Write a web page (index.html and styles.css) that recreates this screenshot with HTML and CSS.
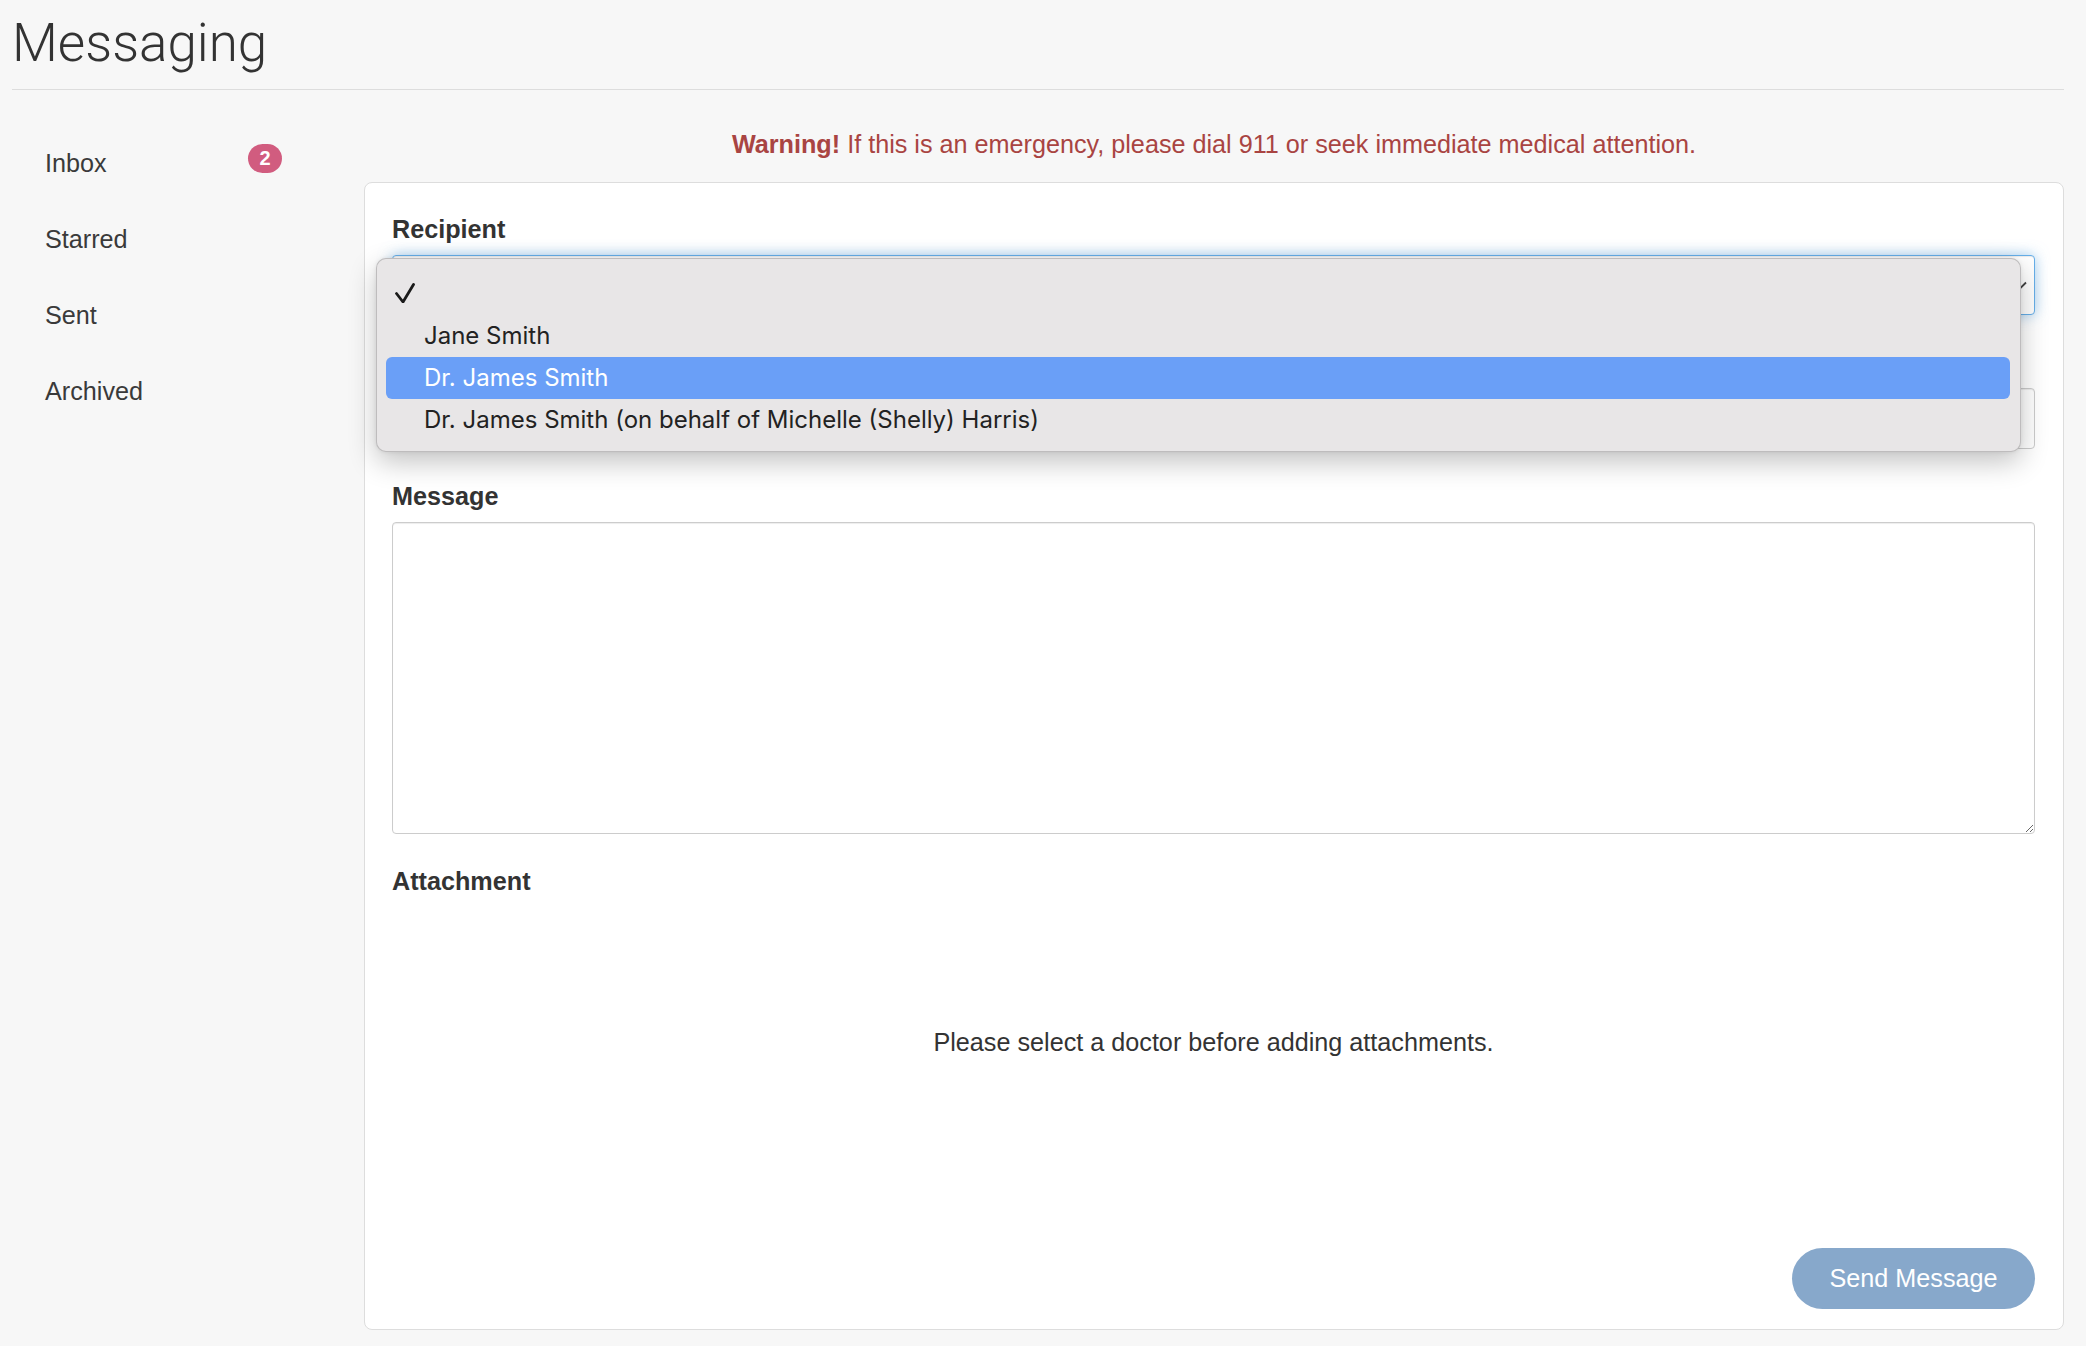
FILE: index.html
```html
<!DOCTYPE html>
<html lang="en">
<head>
    <meta charset="UTF-8">
    <meta name="viewport" content="width=device-width, initial-scale=1.0">
    <title>Messaging</title>
    <link rel="stylesheet" href="styles.css">
</head>
<body>
    <header class="pageHeader">
        <h1>Messaging</h1>
    </header>
    <div class="layout">
        <aside class="sidebar">
            <ul class="nav">
                <li><a href="#">Inbox <span class="badge">2</span></a></li>
                <li><a href="#">Starred</a></li>
                <li><a href="#">Sent</a></li>
                <li><a href="#">Archived</a></li>
            </ul>
        </aside>
        <main class="content">
            <p class="warning"><strong>Warning!</strong> If this is an emergency, please dial 911 or seek immediate medical attention.</p>
            <form class="card">
                <div class="formGroup">
                    <label>Recipient</label>
                    <div class="selectWrap">
                        <div class="select">
                            <svg width="14" height="9" viewBox="0 0 14 9"><path d="M1 1.5 L7 7.5 L13 1.5" fill="none" stroke="#444" stroke-width="1.8"/></svg>
                        </div>
                        <ul class="popup">
                            <li class="option">
                                <svg class="check" width="20" height="20" viewBox="0 0 20 20"><path d="M1.5 10.5 L8 19 L18.5 1.5" fill="none" stroke="#1a1a1a" stroke-width="2.8" stroke-linejoin="round" stroke-linecap="round"/></svg>
                                &nbsp;
                            </li>
                            <li class="option">Jane Smith</li>
                            <li class="option selected">Dr. James Smith</li>
                            <li class="option">Dr. James Smith (on behalf of Michelle (Shelly) Harris)</li>
                        </ul>
                    </div>
                </div>
                <div class="formGroup">
                    <label>Subject</label>
                    <input type="text" class="input">
                </div>
                <div class="formGroup">
                    <label>Message</label>
                    <textarea class="input textArea"></textarea>
                </div>
                <div class="formGroup">
                    <label>Attachment</label>
                    <div class="attachNote">Please select a doctor before adding attachments.</div>
                </div>
                <div class="actions">
                    <button type="button" class="sendBtn">Send Message</button>
                </div>
            </form>
        </main>
    </div>
</body>
</html>
```

FILE: styles.css
```css
* {
    box-sizing: border-box;
}
body {
    margin: 0;
    background-color: #f7f7f7;
    font-family: "Liberation Sans", Arial, sans-serif;
    font-size: 25.2px;
    line-height: 36px;
    color: #333;
}
.pageHeader {
    margin: 0 22px 0 12px;
    padding: 14px 0 16px;
    border-bottom: 1px solid #ddd;
}
.pageHeader h1 {
    margin: 0;
    font-family: Roboto, "Liberation Sans", sans-serif;
    font-weight: 300;
    font-size: 53px;
    line-height: 59px;
    color: #333;
}
.layout {
    display: flex;
    padding: 0 22px 0 12px;
}
.sidebar {
    width: 352px;
    flex-shrink: 0;
}
.nav {
    list-style: none;
    margin: 37px 0 0 6px;
    padding: 0;
    width: 291px;
}
.nav li {
    margin-bottom: 4px;
}
.nav a {
    display: flex;
    justify-content: space-between;
    align-items: flex-start;
    padding: 18px 27px;
    color: #3a3a3a;
    text-decoration: none;
}
.badge {
    margin-top: -1px;
    min-width: 34px;
    height: 29px;
    padding: 0 9px;
    border-radius: 15px;
    background-color: #d15c7f;
    color: #fff;
    font-size: 20px;
    font-weight: bold;
    line-height: 29px;
    text-align: center;
}
.content {
    flex: 1;
    min-width: 0;
}
.warning {
    margin: 36px 0 20px;
    text-align: center;
    color: #a94442;
}
.card {
    background-color: #fff;
    border: 1px solid #ddd;
    border-radius: 8px;
    padding: 28px 28px 20px 27px;
}
.formGroup {
    margin-bottom: 29px;
}
.formGroup label {
    display: block;
    font-weight: bold;
    margin-bottom: 8px;
}
.selectWrap {
    position: relative;
}
.select {
    display: flex;
    align-items: center;
    justify-content: flex-end;
    height: 60px;
    padding-right: 7px;
    background-color: #fff;
    border: 1px solid #66afe9;
    border-radius: 4px;
    box-shadow: inset 0 1px 1px rgba(0, 0, 0, .075), 0 0 14px rgba(102, 175, 233, .6);
}
.popup {
    position: absolute;
    left: -16px;
    right: 14px;
    top: 3px;
    margin: 0;
    padding: 14px 10px 10px 9px;
    list-style: none;
    background-color: #e8e6e7;
    border: 1px solid rgba(0, 0, 0, .18);
    border-radius: 10px;
    box-shadow: 0 10px 28px rgba(0, 0, 0, .24), 0 0 4px rgba(0, 0, 0, .08);
    z-index: 5;
}
.option {
    position: relative;
    height: 42px;
    padding-left: 38px;
    border-radius: 6px;
    font-family: Inter, "Liberation Sans", sans-serif;
    font-size: 24px;
    line-height: 42px;
    color: #222;
}
.option.selected {
    background-color: #6a9ff7;
    color: #fff;
}
.check {
    position: absolute;
    left: 9px;
    top: 10px;
}
.input {
    display: block;
    width: 100%;
    height: 61px;
    background-color: #fff;
    border: 1px solid #ccc;
    border-radius: 4px;
    box-shadow: inset 0 1px 1px rgba(0, 0, 0, .075);
    font: inherit;
}
.textArea {
    height: 312px;
}
.attachNote {
    padding: 117px 0;
    text-align: center;
    color: #333;
}
.actions {
    display: flex;
    justify-content: flex-end;
    padding-top: 42px;
}
.sendBtn {
    width: 243px;
    height: 61px;
    border: 0;
    border-radius: 31px;
    background-color: #87a8cb;
    color: #fff;
    font-family: "Liberation Sans", Arial, sans-serif;
    font-size: 25.2px;
}
```
